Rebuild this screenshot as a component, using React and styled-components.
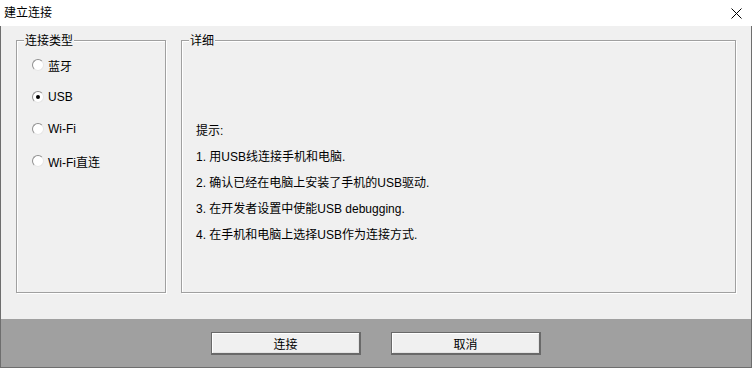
import styled, { createGlobalStyle } from "styled-components";

const GlobalStyle = createGlobalStyle`
	html, body {
		margin: 0;
		padding: 0;
		background: #ffffff;
	}
	body {
		font-family: "Liberation Sans Narrow", "Liberation Sans", "Noto Sans CJK SC", sans-serif;
		font-size: 12px;
		color: #000;
	}
`;

const Window = styled.div`
	width: 752px;
	height: 368px;
	display: flex;
	flex-direction: column;
	background: #ffffff;
	overflow: hidden;
`;

const TitleBar = styled.div`
	height: 26px;
	display: flex;
	align-items: center;
	justify-content: space-between;
	padding: 0 10px 0 4px;
	background: #ffffff;
	box-sizing: border-box;

	.title {
		font-size: 12px;
		line-height: 16px;
	}
`;

const CloseButton = styled.svg`
	width: 11px;
	height: 11px;
	display: block;
`;

const Body = styled.div`
	height: 293px;
	box-sizing: border-box;
	display: flex;
	gap: 15px;
	padding: 14px 15px 26px 15px;
	background: #f0f0f0;
	border-left: 1px solid #6e6e6e;
	border-right: 1px solid #6e6e6e;
`;

const GroupBox = styled.div`
	position: relative;
	width: ${(p) => p.$width}px;
	height: 253px;
	box-sizing: border-box;
	border: 1px solid #a0a0a0;
	box-shadow: 1px 1px 0 #ffffff, inset 1px 1px 0 #ffffff;
	padding: ${(p) => p.$padding};
	display: flex;
	flex-direction: column;
`;

const Legend = styled.span`
	position: absolute;
	top: -9px;
	left: ${(p) => p.$left}px;
	padding: 0 1px;
	background: #f0f0f0;
	font-family: "Noto Sans CJK SC", sans-serif;
	font-size: 12px;
	line-height: 16px;
`;

const RadioRow = styled.label`
	height: 32px;
	display: flex;
	align-items: center;
	gap: 4px;
	padding-left: 15px;
	font-size: 12px;
`;

const RadioCircle = styled.span`
	width: 12px;
	height: 12px;
	box-sizing: border-box;
	border-radius: 50%;
	border: 1px solid;
	border-color: #8f8f8f #e6e6e6 #e6e6e6 #8f8f8f;
	background: #ffffff;
	display: flex;
	align-items: center;
	justify-content: center;

	&::after {
		content: "";
		width: 4px;
		height: 4px;
		border-radius: 50%;
		background: ${(p) => (p.$checked ? "#000" : "transparent")};
	}
`;

const HintLine = styled.div`
	height: 26px;
	line-height: 26px;
	font-size: 12px;
	white-space: nowrap;
`;

const Footer = styled.div`
	flex: 1;
	display: flex;
	justify-content: center;
	gap: 30px;
	padding-top: 13px;
	box-sizing: border-box;
	background: #a0a0a0;
	border: 1px solid #6e6e6e;
	border-top: none;
`;

const Button = styled.button`
	width: 150px;
	height: 23px;
	box-sizing: border-box;
	background: #f0f0f0;
	border: 1px solid #696969;
	border-right-width: 2px;
	border-bottom-width: 2px;
	box-shadow: inset 1px 1px 0 #ffffff, inset -1px -1px 0 #e3e3e3;
	font-family: "Noto Sans CJK SC", sans-serif;
	font-size: 12px;
	color: #000;
	padding: 0;
	cursor: pointer;
`;

const modes = [
	{ label: "蓝牙", checked: false },
	{ label: "USB", checked: true },
	{ label: "Wi-Fi", checked: false },
	{ label: "Wi-Fi直连", checked: false },
];

const hints = [
	"提示:",
	"1. 用USB线连接手机和电脑.",
	"2. 确认已经在电脑上安装了手机的USB驱动.",
	"3. 在开发者设置中使能USB debugging.",
	"4. 在手机和电脑上选择USB作为连接方式.",
];

function App() {
	return (
		<>
			<GlobalStyle />
			<Window>
				<TitleBar>
					<span className='title'>建立连接</span>
					<CloseButton viewBox='0 0 11 11'>
						<path d='M0.5 0.5 L10.5 10.5 M10.5 0.5 L0.5 10.5' stroke='#000' strokeWidth='1' />
					</CloseButton>
				</TitleBar>
				<Body>
					{/* connection type */}
					<GroupBox $width={150} $padding='8px 0 0 0'>
						<Legend $left={7}>连接类型</Legend>
						{modes.map((m) => (
							<RadioRow key={m.label}>
								<RadioCircle $checked={m.checked} />
								<span>{m.label}</span>
							</RadioRow>
						))}
					</GroupBox>

					{/* details */}
					<GroupBox $width={555} $padding='77px 0 0 14px'>
						<Legend $left={7}>详细</Legend>
						{hints.map((h) => (
							<HintLine key={h}>{h}</HintLine>
						))}
					</GroupBox>
				</Body>
				<Footer>
					<Button>连接</Button>
					<Button>取消</Button>
				</Footer>
			</Window>
		</>
	);
}

export default App;
